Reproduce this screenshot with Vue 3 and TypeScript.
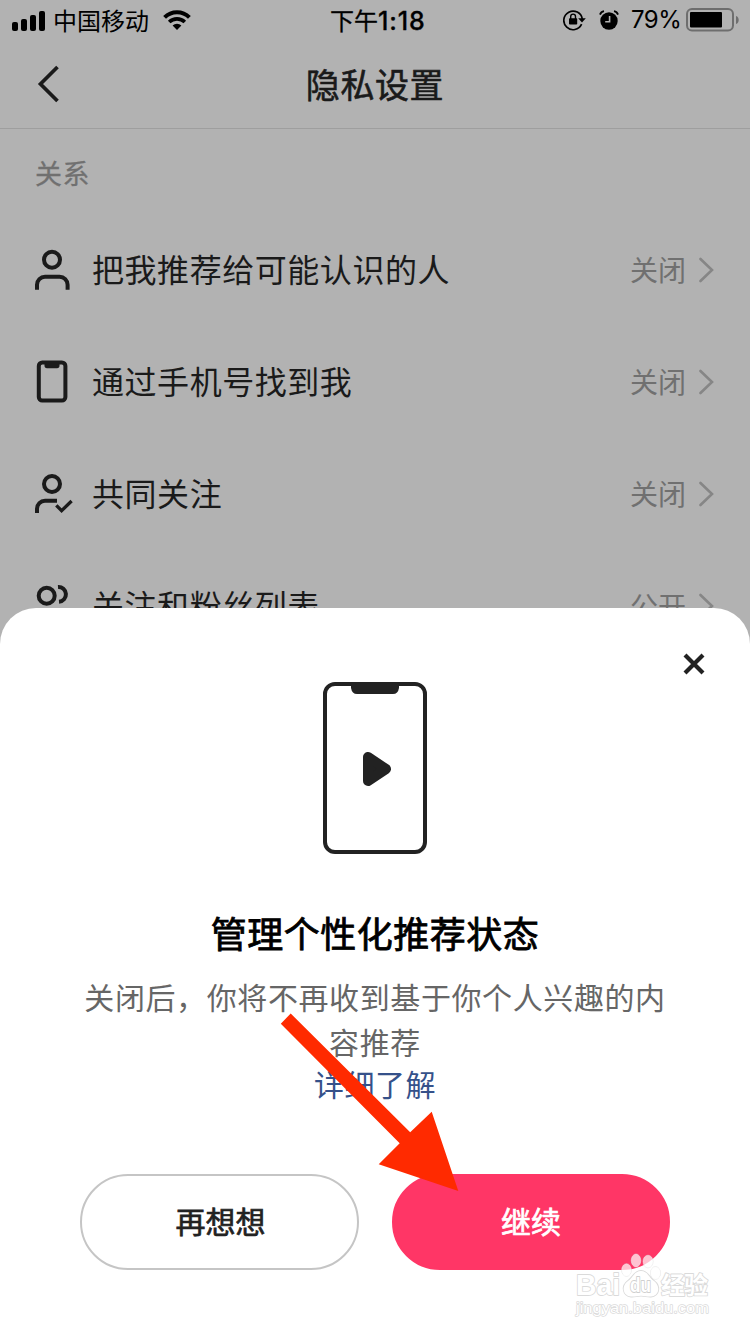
<script setup lang="ts">
interface Row {
  icon: 'person' | 'phone' | 'mutual' | 'people'
  label: string
  value: string
}

const rows: Row[] = [
  { icon: 'person', label: '把我推荐给可能认识的人', value: '关闭' },
  { icon: 'phone', label: '通过手机号找到我', value: '关闭' },
  { icon: 'mutual', label: '共同关注', value: '关闭' },
  { icon: 'people', label: '关注和粉丝列表', value: '公开' },
]
</script>

<template>
  <div class="screen">
    <header class="status">
      <div class="carrier">
        <svg class="signal" width="34" height="21" viewBox="0 0 34 21">
          <rect x="0" y="12" width="6" height="9" rx="2" />
          <rect x="9" y="9" width="6" height="12" rx="2" />
          <rect x="18" y="5" width="6" height="16" rx="2" />
          <rect x="27" y="1" width="6" height="20" rx="2" />
        </svg>
        <span class="status-text">中国移动</span>
        <svg class="wifi" width="28" height="20" viewBox="0 0 28 20">
          <path d="M1.6 7.4a17.6 17.6 0 0 1 24.8 0" fill="none" stroke="#000" stroke-width="4" />
          <path d="M6.2 12.1a11 11 0 0 1 15.6 0" fill="none" stroke="#000" stroke-width="3.6" />
          <path d="M14 20l-4.4-4.4a6.3 6.3 0 0 1 8.8 0z" />
        </svg>
      </div>
      <div class="clock">下午<b>1:18</b></div>
      <div class="indicators">
        <svg width="24" height="22" viewBox="0 0 24 22">
          <path d="M18.6 15.2A9.3 9.3 0 1 1 19.3 10" fill="none" stroke="#000" stroke-width="1.7" />
          <path d="M15.2 9.3h7.6L19 13.6z" />
          <rect x="6" y="9.3" width="8.2" height="6.3" rx=".8" />
          <path d="M7.7 10V7.5a2.4 2.4 0 0 1 4.8 0V10" fill="none" stroke="#000" stroke-width="1.4" />
        </svg>
        <svg class="alarm" width="20" height="20" viewBox="0 0 20 20">
          <circle cx="10" cy="11" r="8.7" />
          <path d="M1 4.600A5 5 0 0 1 5 1.200M19 4.600a5 5 0 0 0-4-3.400" fill="none" stroke="#000" stroke-width="1.800" />
          <path d="M10.600 6v5.800H6.200" fill="none" stroke="#b2b2b2" stroke-width="1.600" />
        </svg>
        <span class="percent">79%</span>
        <svg class="battery" width="54" height="24" viewBox="0 0 54 24">
          <rect x="1" y="1" width="46" height="21.500" rx="5" fill="none" stroke="#6e6e6e" stroke-width="2" />
          <rect x="4" y="4" width="32" height="15.500" rx="1" />
          <path d="M50 8c3.600 1 3.600 7 0 8z" fill="#6e6e6e" />
        </svg>
      </div>
    </header>

    <nav class="navbar">
      <svg class="back" width="24" height="38" viewBox="0 0 24 38">
        <path d="M20.500 2L3.500 19l17 17" fill="none" stroke="#1a1a1a" stroke-width="3.700" />
      </svg>
      <h1>隐私设置</h1>
    </nav>

    <main>
      <h2>关系</h2>
      <div v-for="row in rows" :key="row.label" class="row">
        <svg class="row-icon" width="42" height="48" viewBox="0 0 42 48" fill="none" stroke="#1a1a1a" stroke-width="4">
          <template v-if="row.icon === 'person'">
            <circle cx="19" cy="13.800" r="8" />
            <path d="M4 43.700V38.700a8 8 0 0 1 8-8h14.600a8 8 0 0 1 8 8v5" />
          </template>
          <template v-else-if="row.icon === 'phone'">
            <rect x="5.800" y="4.400" width="26.600" height="38.200" rx="3.500" />
            <path d="M11.500 4h15v3.500q0 2.700-2.500 2.700h-10q-2.500 0-2.500-2.700z" fill="#1a1a1a" stroke="none" />
          </template>
          <template v-else-if="row.icon === 'mutual'">
            <circle cx="19" cy="14" r="8" />
            <path d="M4 43V38.700a8 8 0 0 1 8-8h12" />
            <path d="M23.300 35.300l5.300 5.400L38.600 31" stroke-width="3.300" />
          </template>
          <template v-else>
            <circle cx="13.700" cy="13.700" r="8" />
            <path d="M25 5a7.400 7.400 0 1 1 1 14.800" />
          </template>
        </svg>
        <span class="label">{{ row.label }}</span>
        <span class="value">{{ row.value }}</span>
        <svg class="chevron" width="15" height="26" viewBox="0 0 15 26">
          <path d="M1.500 2L13 13 1.500 24" fill="none" stroke="#868686" stroke-width="2.600" stroke-linecap="round" />
        </svg>
      </div>
    </main>

    <section class="sheet">
      <div class="sheet-top">
        <svg width="22" height="22" viewBox="0 0 22 22">
          <path d="M2 2l18 18M20 2L2 20" stroke="#222" stroke-width="4.200" />
        </svg>
      </div>
      <svg class="device" width="104" height="172" viewBox="0 0 104 172">
        <rect x="2" y="2" width="100" height="168" rx="10" fill="none" stroke="#222" stroke-width="4" />
        <path d="M28 3h48v3q-1 6-6 6H34q-5 0-6-6z" fill="#222" />
        <path d="M45 75v24L63 87z" fill="#222" stroke="#222" stroke-width="10" stroke-linejoin="round" />
      </svg>
      <h3>管理个性化推荐状态</h3>
      <p>关闭后，你将不再收到基于你个人兴趣的内<br />容推荐</p>
      <a>详细了解</a>
      <div class="actions">
        <button class="ghost" type="button">再想想</button>
        <button class="primary" type="button">继续</button>
      </div>
    </section>

    <svg class="arrow" width="180" height="180" viewBox="280 1012 180 180">
      <path d="M290.700 1013.500L280.800 1023.700l118.900 119.600-21 21 79.600 26.700-26.600-79.300-21.500 20.600z" fill="#ff2a00" />
    </svg>

    <svg class="watermark" width="140" height="70" viewBox="572 1250 140 70">
      <g fill="#fff" stroke="#dadada" stroke-width="1.800" paint-order="stroke" stroke-linejoin="round">
        <g fill-opacity=".7" stroke-width=".8" stroke-opacity=".7">
          <ellipse cx="626.500" cy="1270" rx="4.800" ry="6.300" />
          <ellipse cx="636" cy="1260.500" rx="4.800" ry="6.500" />
          <ellipse cx="648" cy="1261.500" rx="5" ry="6.300" />
          <ellipse cx="655.500" cy="1273" rx="5" ry="6.300" />
        </g>
        <path d="M641 1271c-7 0-8 7-13 10-7 5-5 15 3 15.500 4 .3 6-.8 10-.8s6 1 10 .8c8-.5 10-10 3-15.500-5-3-6-10-13-10z" stroke-width="1.800" />
        <text class="latin" x="576" y="1295" font-size="30" textLength="44" lengthAdjust="spacingAndGlyphs">Bai</text>
        <text class="latin" x="630" y="1292" font-size="20" textLength="21" lengthAdjust="spacingAndGlyphs" stroke="#cfcfcf">du</text>
        <text class="cjk" x="661" y="1293.500" font-size="24" font-weight="700" textLength="47">经验</text>
        <text class="latin url" x="576" y="1313" font-size="15" stroke-width="1.400" textLength="133" lengthAdjust="spacingAndGlyphs">jingyan.baidu.com</text>
      </g>
    </svg>
  </div>
</template>

<style>
body {
  margin: 0;
}
</style>

<style scoped>
.screen {
  position: relative;
  width: 750px;
  height: 1334px;
  overflow: hidden;
  background: #b2b2b2;
  color: #1a1a1a;
  font-family: "Noto Sans CJK SC", sans-serif;
}

svg {
  display: block;
  flex: none;
}

.status {
  display: grid;
  grid-template-columns: 1fr auto 1fr;
  grid-template-rows: 40px;
  align-items: center;
  height: 40px;
  padding: 0 10px 0 12px;
  color: #000;
  font-size: 24px;
  line-height: 40px;
}

.carrier,
.indicators {
  display: flex;
  align-items: center;
  height: 40px;
}

.status-text {
  margin: 0 14px 0 7px;
}

.clock {
  display: flex;
  height: 40px;
  padding-left: 6px;
  -webkit-text-stroke: 0.3px #000;
}

.clock b {
  width: 50px;
  font: 500 25px/42px Inter, sans-serif;
  letter-spacing: 0.9px;
}

.indicators {
  justify-content: flex-end;
}

.alarm {
  margin: 0 12px;
}

.percent {
  width: 48px;
  margin-right: 7px;
  font-family: Inter, sans-serif;
  font-size: 24px;
  line-height: 42px;
  letter-spacing: -0.5px;
}

.navbar {
  display: grid;
  grid-template-columns: 100px 1fr 100px;
  align-items: center;
  height: 88px;
  border-bottom: 1px solid #9e9e9e;
}

.back {
  margin-left: 37px;
}

h1 {
  height: 88px;
  margin: 0;
  text-align: center;
  font-size: 34px;
  font-weight: 400;
  line-height: 88px;
  letter-spacing: 0.6px;
  -webkit-text-stroke: 0.6px #1a1a1a;
}

h2 {
  height: 85px;
  margin: 0;
  padding-left: 35px;
  color: #707070;
  font-size: 27px;
  font-weight: 400;
  line-height: 88px;
  letter-spacing: 0.5px;
  -webkit-text-stroke: 0.3px #707070;
}

.row {
  display: flex;
  align-items: center;
  height: 112px;
  padding: 0 36px 0 33px;
}

.label {
  flex: 1;
  margin-left: 17px;
  padding-bottom: 5px;
  font-size: 32px;
  font-weight: 400;
  letter-spacing: 0.55px;
}

.value {
  margin-right: 13px;
  padding-bottom: 3px;
  color: #707070;
  font-size: 28px;
}

.sheet {
  position: absolute;
  right: 0;
  bottom: 0;
  left: 0;
  display: flex;
  flex-direction: column;
  align-items: center;
  height: 726px;
  border-radius: 36px 36px 0 0;
  background: #fff;
}

.sheet-top {
  display: flex;
  align-self: stretch;
  justify-content: flex-end;
  height: 29px;
  padding: 45px 45px 0 0;
}

h3 {
  margin: 50px 0 0;
  color: #000;
  font-size: 36px;
  font-weight: 400;
  line-height: 56px;
  letter-spacing: 0.5px;
  -webkit-text-stroke: 0.8px #000;
}

p {
  margin: 14px 0 0;
  color: #666;
  text-align: center;
  font-size: 30px;
  line-height: 45px;
  letter-spacing: 0.6px;
}

a {
  color: #35518a;
  font-size: 30px;
  line-height: 38px;
  letter-spacing: 0.5px;
}

.actions {
  display: flex;
  gap: 33px;
  margin-top: 72px;
}

button {
  box-sizing: border-box;
  height: 96px;
  padding: 0 0 4px;
  border: 2px solid #c5c5c5;
  border-radius: 48px;
  background: #fff;
  color: #222;
  font: 400 30px/44px "Noto Sans CJK SC", sans-serif;
  -webkit-text-stroke: 0.7px currentColor;
}

.ghost {
  width: 279px;
  padding-left: 2px;
}

.primary {
  width: 278px;
  border-color: #ff3666;
  background: #ff3666;
  color: #fff;
}

.arrow {
  position: absolute;
  top: 1012px;
  left: 280px;
}

.watermark {
  position: absolute;
  top: 1250px;
  left: 572px;
}

.latin {
  font-family: "Liberation Sans", sans-serif;
  font-weight: 700;
}

.url {
  font-weight: 400;
}

.cjk {
  font-family: "Noto Sans CJK SC", sans-serif;
}
</style>
